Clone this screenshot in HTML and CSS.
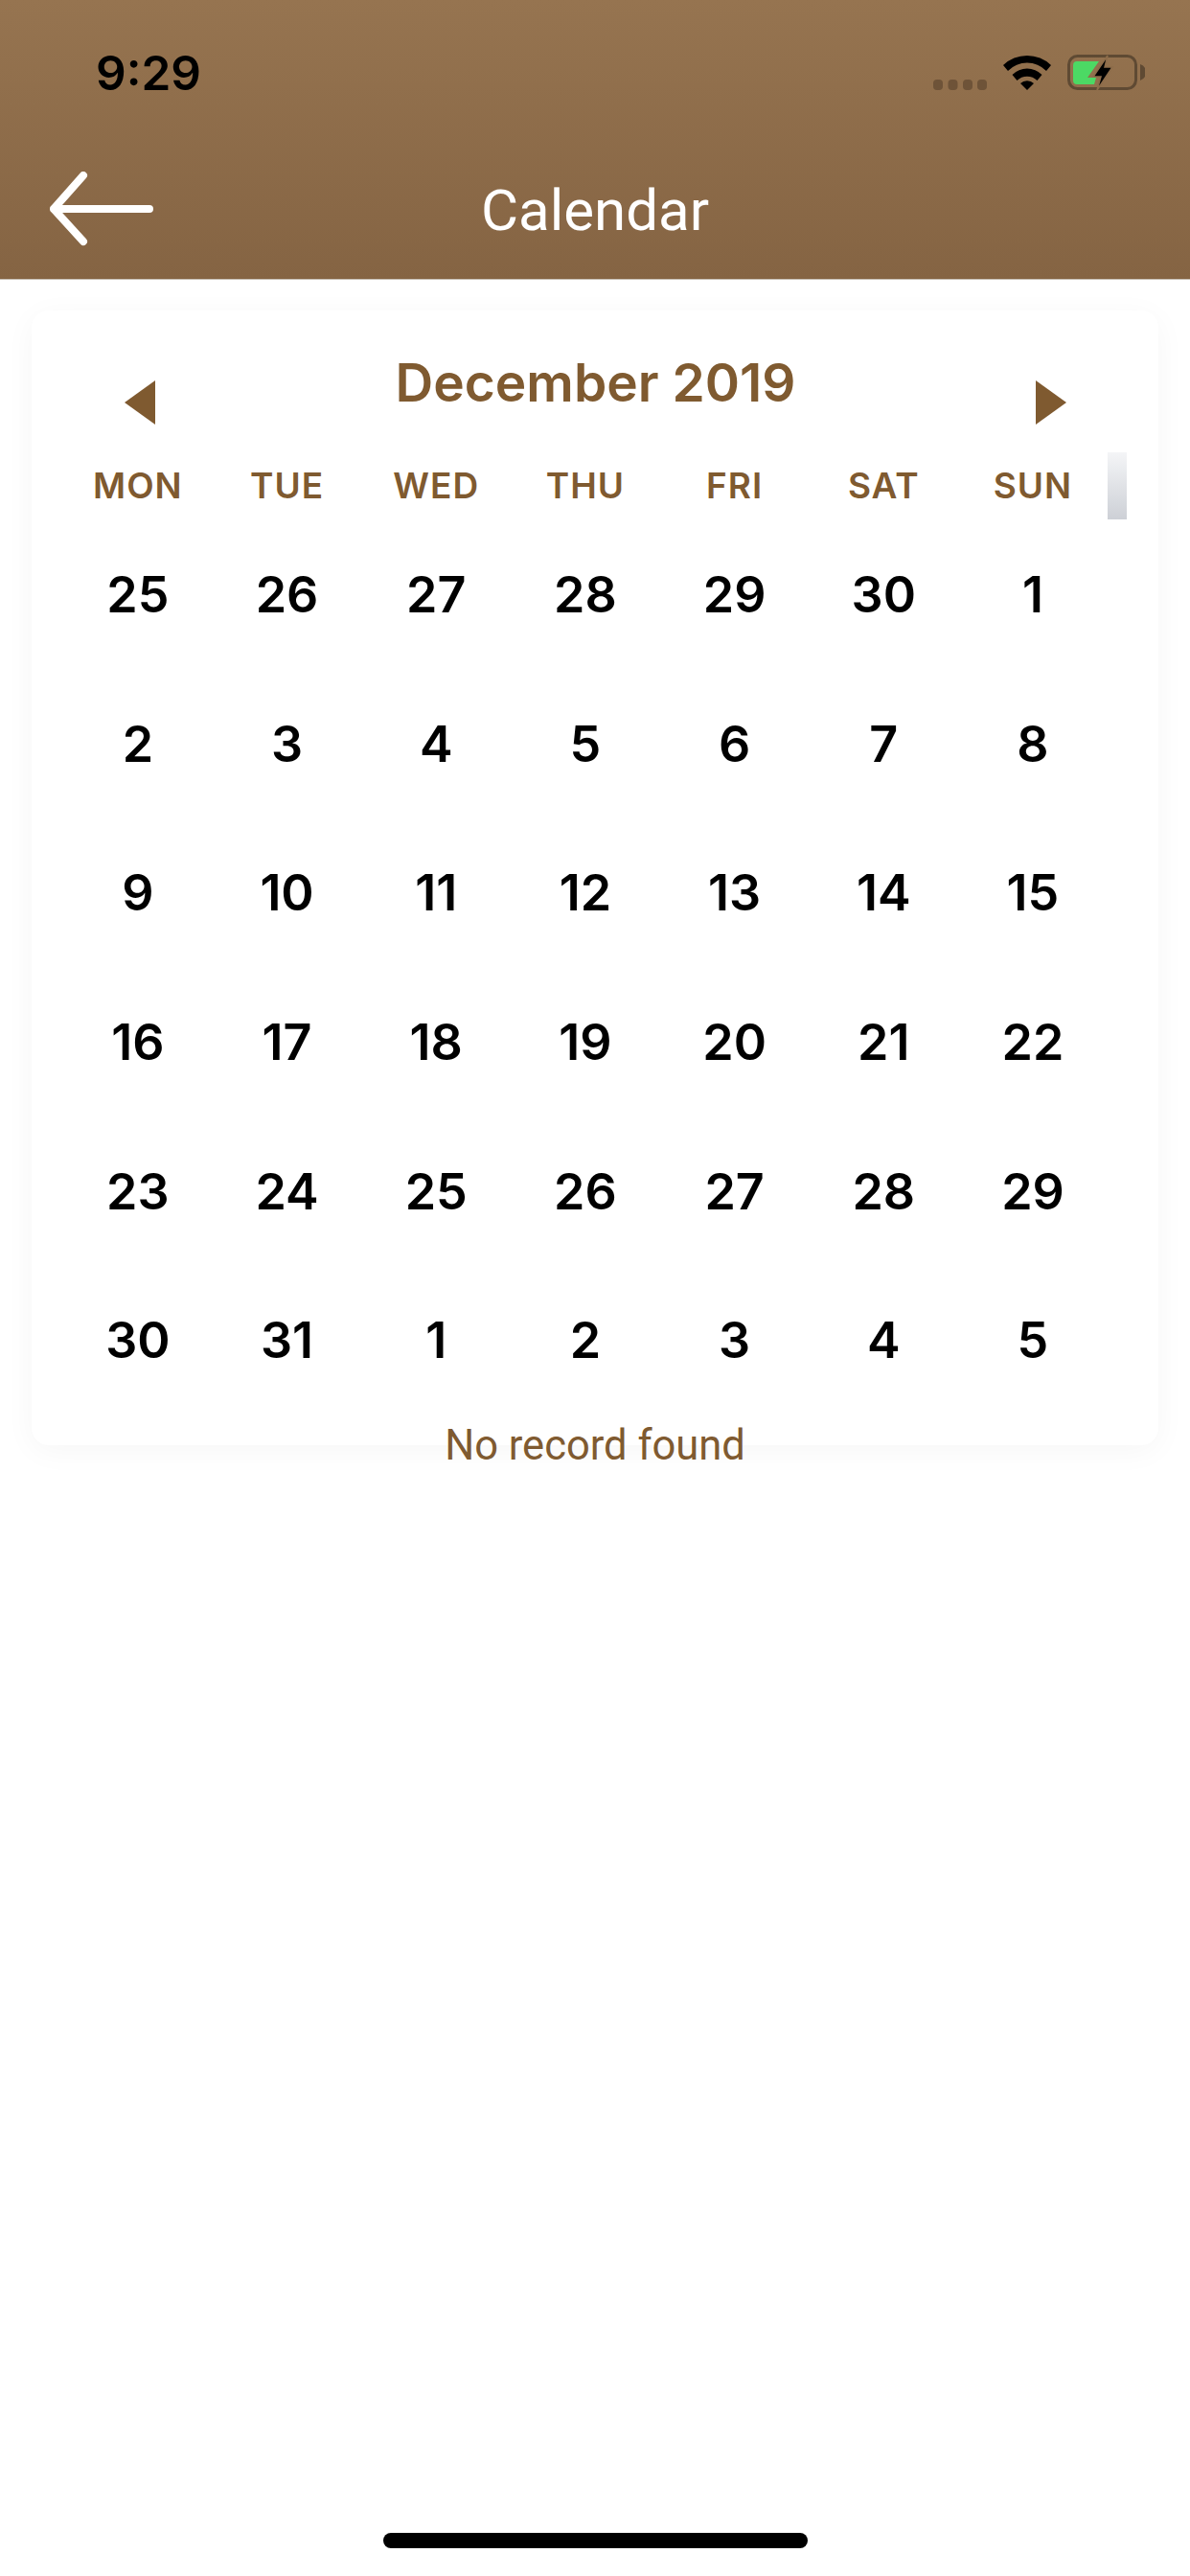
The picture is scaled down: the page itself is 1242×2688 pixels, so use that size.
FILE: index.html
```html
<!DOCTYPE html>
<html>
<head>
    <meta charset="utf-8">
    <title>Calendar</title>
    <link rel="stylesheet" href="styles.css">
</head>
<body>
    <div class="header">
        <div class="status">
            <span class="time">9:29</span>
            <div class="status_icons">
                <svg class="dots" width="56" height="11" viewBox="0 0 56 11">
                    <rect x="0" y="0" width="10" height="11" rx="4"/>
                    <rect x="15.500" y="0" width="10" height="11" rx="4"/>
                    <rect x="31" y="0" width="10" height="11" rx="4"/>
                    <rect x="46" y="0" width="10" height="11" rx="4"/>
                </svg>
                <svg class="wifi" width="50" height="37" viewBox="0 0 50 37">
                    <path d="M0 11 A36 36 0 0 1 50 11 L45 17 A28 28 0 0 0 5 17 Z"/>
                    <path d="M9.500 21 A22 22 0 0 1 40.500 21 L35.500 27 A15 15 0 0 0 14.500 27 Z"/>
                    <path d="M18 30 A10 10 0 0 1 32 30 L25 37 Z"/>
                </svg>
                <svg class="battery" width="81" height="38" viewBox="0 0 81 38">
                    <rect x="1.500" y="1.500" width="70" height="34" rx="9" fill="none" stroke="#5f4a33" stroke-width="3"/>
                    <path d="M76 10 A9 9 0 0 1 76 27 Z" fill="#5f4a33"/>
                    <path d="M6 11 Q6 7 10 7 H33 L21 24 H30 L28 31 H10 Q6 31 6 27 Z" fill="#4cd964"/>
                    <path d="M42 1 L27 23 H35 L31 37 L47 13 H39 Z" fill="#000" stroke="#8d6c4a" stroke-width="1.500"/>
                </svg>
            </div>
        </div>
        <div class="nav">
            <svg class="back" width="110" height="80" viewBox="0 0 110 80">
                <path d="M35 4 L4 39 L35 73 M4 39 H104" fill="none" stroke="#fff" stroke-width="8" stroke-linecap="round" stroke-linejoin="round"/>
            </svg>
            <span class="nav_title">Calendar</span>
        </div>
    </div>

    <div class="card">
        <div class="month_row">
            <svg class="arrow" width="32" height="46" viewBox="0 0 32 46"><path d="M0 23 L32 0 V46 Z"/></svg>
            <span class="month">December 2019</span>
            <svg class="arrow" width="32" height="46" viewBox="0 0 32 46"><path d="M32 23 L0 0 V46 Z"/></svg>
        </div>
        <div class="weekdays">
            <span>MON</span><span>TUE</span><span>WED</span><span>THU</span><span>FRI</span><span>SAT</span><span>SUN</span>
        </div>
        <div class="scroll_thumb"></div>
        <div class="days">
            <span>25</span><span>26</span><span>27</span><span>28</span><span>29</span><span>30</span><span>1</span>
            <span>2</span><span>3</span><span>4</span><span>5</span><span>6</span><span>7</span><span>8</span>
            <span>9</span><span>10</span><span>11</span><span>12</span><span>13</span><span>14</span><span>15</span>
            <span>16</span><span>17</span><span>18</span><span>19</span><span>20</span><span>21</span><span>22</span>
            <span>23</span><span>24</span><span>25</span><span>26</span><span>27</span><span>28</span><span>29</span>
            <span>30</span><span>31</span><span>1</span><span>2</span><span>3</span><span>4</span><span>5</span>
        </div>
        <div class="no_record">No record found</div>
    </div>

    <div class="home_bar"></div>
</body>
</html>
```

FILE: styles.css
```css
html, body
{
    margin: 0;
    height: 100%;
}
body
{
    display: flex;
    flex-direction: column;
    background: white;
    font-family: "Roboto", sans-serif;
}
.header
{
    height: 291px;
    flex: none;
    background: linear-gradient(#967450, #856443);
    border-bottom: 1px solid #c8c0b6;
}
.status
{
    height: 145px;
    display: flex;
    justify-content: space-between;
    padding: 50px 0 0 100px;
    box-sizing: border-box;
}
.time
{
    font-family: "Inter", sans-serif;
    font-size: 49.5px;
    font-weight: 600;
    line-height: 52px;
    color: black;
}
.status_icons
{
    display: flex;
    align-items: flex-start;
    margin: 7px 47px 0 0;
}
.dots
{
    fill: #6e5338;
    margin: 26px 17px 0 0;
}
.wifi
{
    margin-right: 17px;
}
.nav
{
    height: 146px;
    position: relative;
    display: flex;
    align-items: center;
    justify-content: center;
}
.back
{
    position: absolute;
    left: 52px;
    top: 34px;
}
.nav_title
{
    color: white;
    font-size: 60px;
    line-height: 72px;
    padding-top: 3px;
}
.card
{
    position: relative;
    margin: 32px 33px 0;
    padding: 36px 0 0;
    height: 1184px;
    box-sizing: border-box;
    background: white;
    border-radius: 18px;
    box-shadow: 0 6px 32px rgba(0, 0, 0, 0.04);
}
.month_row
{
    display: flex;
    justify-content: space-between;
    padding: 0 96px 0 97px;
    height: 74px;
}
.arrow
{
    fill: #7f5a30;
    margin-top: 37px;
}
.month
{
    color: #7f5a30;
    font-family: "Inter", sans-serif;
    font-size: 55px;
    font-weight: 600;
    line-height: 78px;
}
.weekdays, .days
{
    display: grid;
    grid-template-columns: repeat(7, 155.7px);
    padding-left: 33px;
    text-align: center;
}
.weekdays
{
    margin-top: 42px;
    height: 67px;
    color: #7f5a30;
    font-family: "Inter", sans-serif;
    font-size: 37px;
    font-weight: 600;
    letter-spacing: 1px;
    line-height: 62px;
}
.scroll_thumb
{
    position: absolute;
    left: 1123px;
    top: 148px;
    width: 20px;
    height: 70px;
    background: linear-gradient(#f4f5f7, #cdd0d6);
}
.days
{
    grid-auto-rows: 155.6px;
    align-items: center;
    color: black;
    font-family: "Inter", sans-serif;
    font-size: 52px;
    font-weight: 600;
}
.no_record
{
    margin-top: 7px;
    text-align: center;
    color: #7f5a30;
    font-size: 43.5px;
    line-height: 50px;
}
.home_bar
{
    width: 443px;
    height: 16px;
    margin: auto auto 29px;
    border-radius: 8px;
    background: black;
}
```
